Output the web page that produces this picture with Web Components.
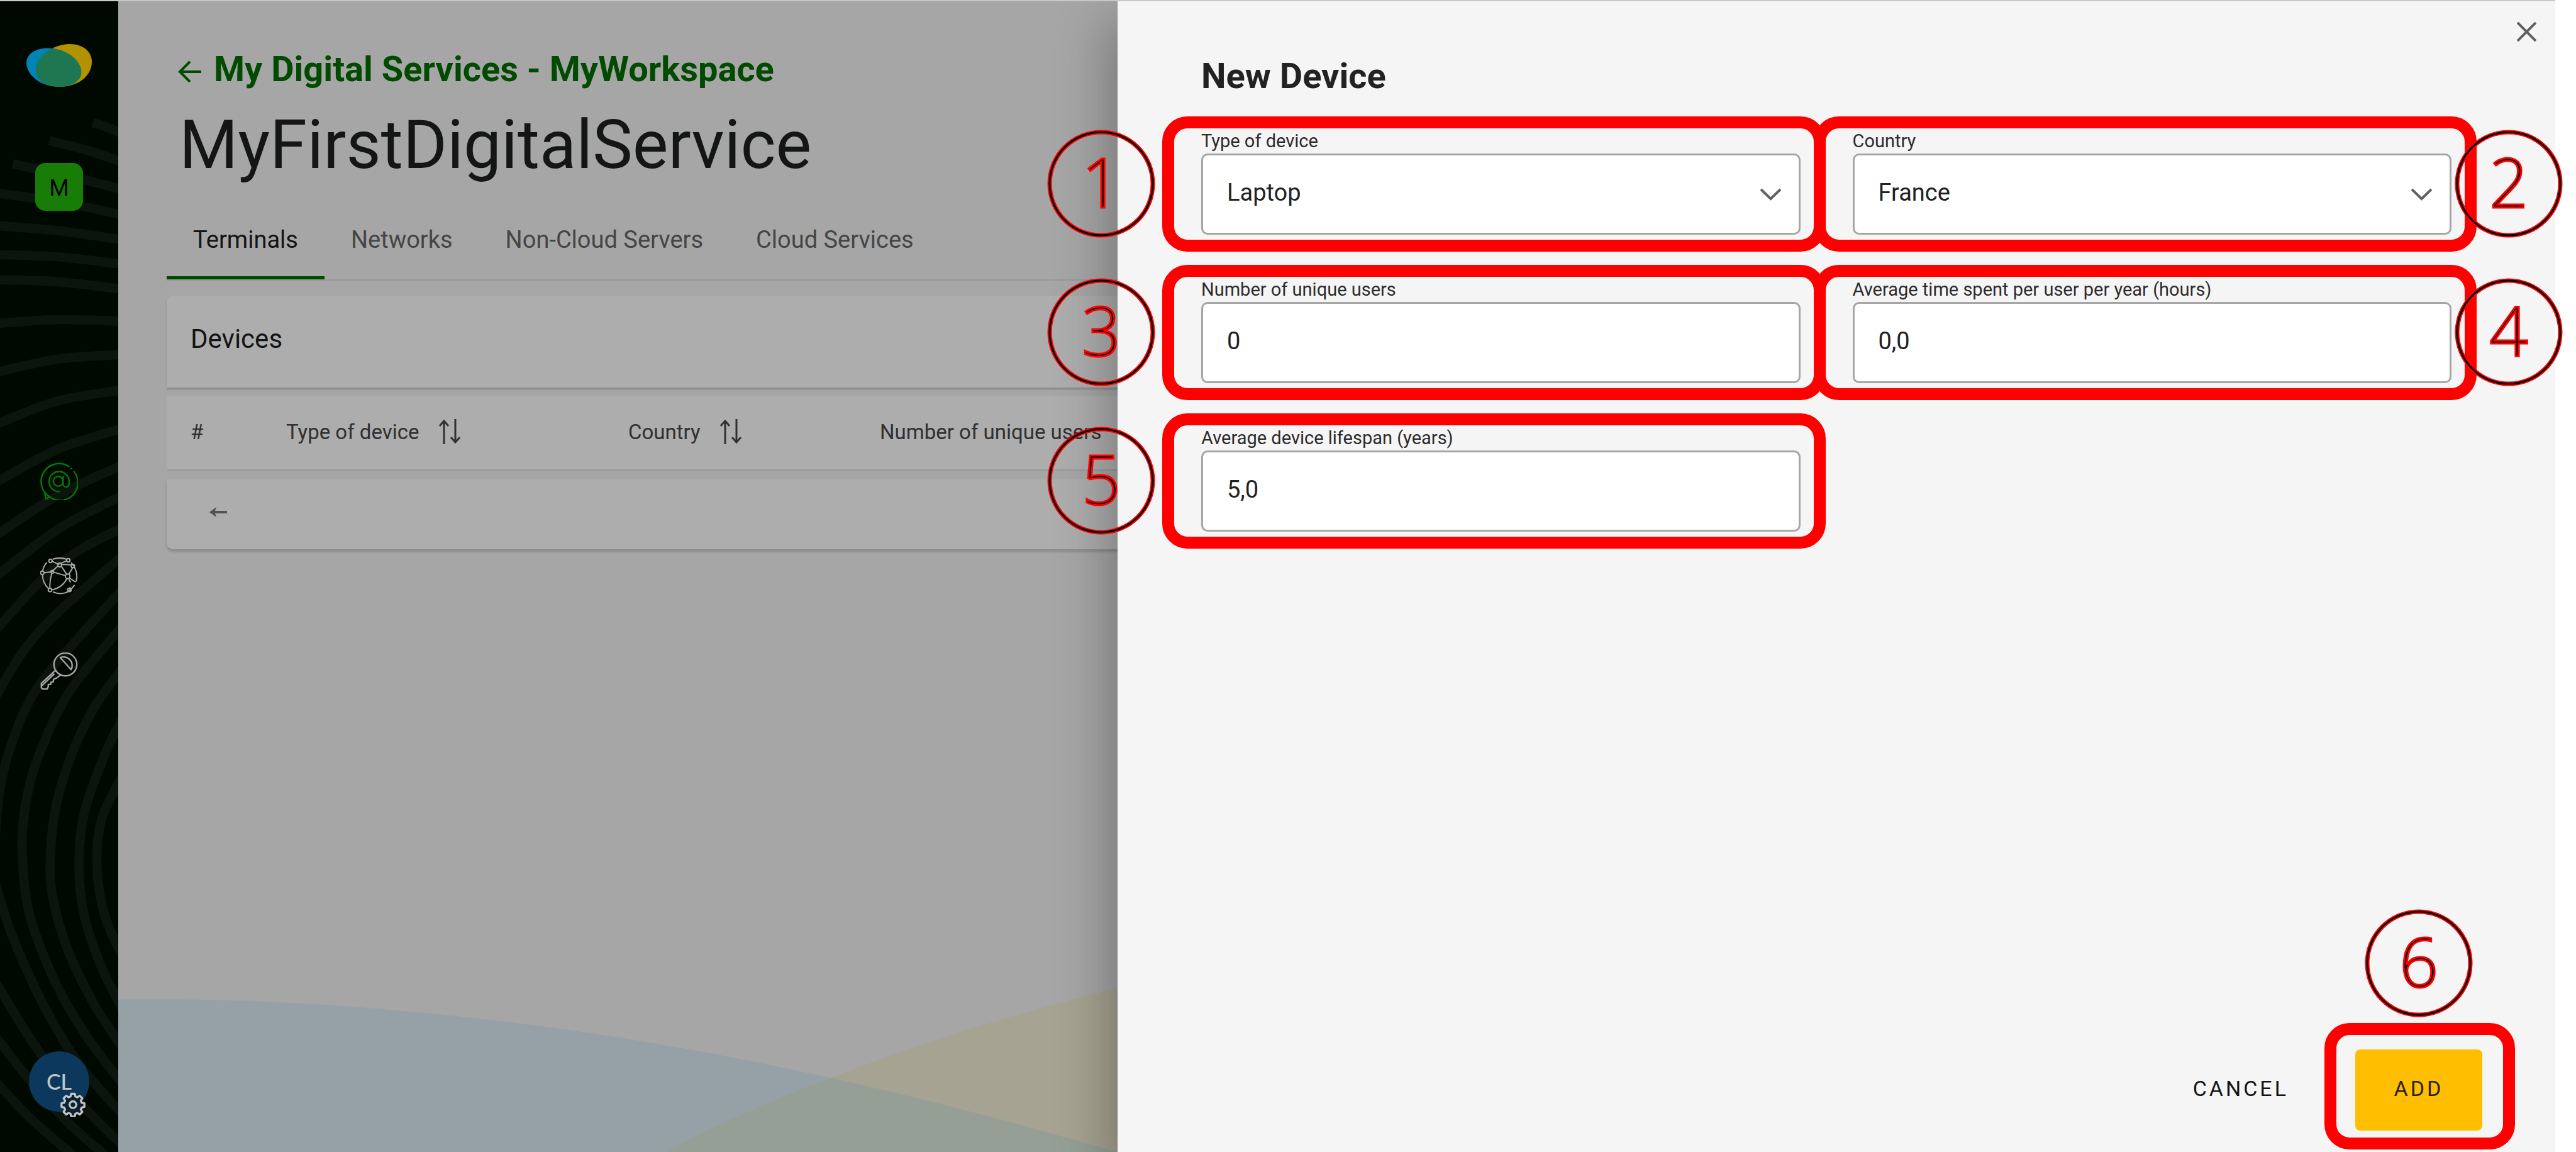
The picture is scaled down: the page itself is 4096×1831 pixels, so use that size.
<!DOCTYPE html>
<html lang="en">
<head>
<meta charset="utf-8">
<title>MyFirstDigitalService - New Device</title>
<style>
  html, body { height: 100%; margin: 0; background: #fff; }
  body { font-family: Roboto, "Liberation Sans", sans-serif; color: #141414; }
</style>
</head>
<body>
<app-shell>
  <side-nav slot="nav"></side-nav>
  <service-page slot="page"></service-page>
  <side-drawer slot="drawer" heading="New Device">
    <form-field label="Type of device" value="Laptop" kind="select" step="1"></form-field>
    <form-field label="Country" value="France" kind="select" step="2" side="right"></form-field>
    <form-field label="Number of unique users" value="0" step="3"></form-field>
    <form-field label="Average time spent per user per year (hours)" value="0,0" step="4" side="right"></form-field>
    <form-field label="Average device lifespan (years)" value="5,0" step="5"></form-field>
  </side-drawer>
</app-shell>

<script>
class Base extends HTMLElement {
  connectedCallback() {
    if (this.shadowRoot) return;
    this.attachShadow({ mode: 'open' }).innerHTML =
      '<style>*{box-sizing:border-box}button{font:inherit;color:inherit;background:none;border:0;padding:0;margin:0}svg{display:block}</style>' + this.render();
  }
}

customElements.define('app-shell', class extends Base {
  render() {
    return `<style>
      :host { display: grid; grid-template-columns: 188px 1589fr 2286fr 33px; grid-template-rows: 100%; height: 100vh; overflow: hidden; }
      ::slotted(*) { grid-row: 1; border-top: 2px solid #c8c8c8; box-sizing: border-box; min-width: 0; }
      ::slotted([slot=nav]) { grid-column: 1; }
      ::slotted([slot=page]) { grid-column: 2 / 4; }
      ::slotted([slot=drawer]) { grid-column: 3; z-index: 1; }
    </style>
    <slot name="nav"></slot><slot name="page"></slot><slot name="drawer"></slot>`;
  }
});

/* Arcs of the navigation background, as points that a smooth curve runs through. */
const ARCS = [
  [[160,211],[180,217],[212,231]],
  [[85,242],[145,257],[212,279]],
  [[22,282],[110,301],[212,326]],
  [[-8,332],[100,347],[212,370]],
  [[-8,388],[100,397],[212,413]],
  [[-8,438],[100,442],[212,455]],
  [[-8,481],[100,485],[212,498]],
  [[-8,557],[100,550],[212,553]],
  [[-8,641],[100,618],[212,610]],
  [[-8,731],[100,690],[212,671]],
  [[-8,831],[100,773],[212,737]],
  [[-8,922],[100,852],[212,800]],
  [[-8,993],[100,911],[212,852]],
  [[-8,1085],[100,972],[212,907]],
  [[-8,1200],[40,1121],[100,1054],[212,956]],
  [[-8,1440],[-2,1370],[15,1295],[50,1208],[100,1138],[212,1013]],
  [[212,1867],[150,1785],[95,1690],[50,1570],[38,1461],[45,1380],[67,1300],[120,1190],[212,1076]],
  [[212,1805],[160,1725],[115,1630],[90,1540],[87,1470],[97,1385],[123,1300],[160,1222],[212,1148]],
  [[212,1739],[175,1665],[145,1575],[136,1490],[145,1400],[180,1300],[212,1234]],
  [[212,1648],[180,1575],[167,1490],[175,1410],[212,1334]],
  [[-8,1520],[20,1608],[75,1730],[135,1830],[212,1920]],
  [[-8,1690],[60,1800],[130,1890],[212,1973]],
  [[-8,1784],[60,1870],[120,1935],[190,1996]],
  [[-8,1862],[60,1932],[140,2000]]
];
const smooth = p => p.slice(1).reduce((d, b, i) => {
  const a = p[i], z = p[i - 1] || a, c = p[i + 2] || b;
  return d + `C${a[0] + (b[0] - z[0]) / 6} ${a[1] + (b[1] - z[1]) / 6} ${b[0] - (c[0] - a[0]) / 6} ${b[1] - (c[1] - a[1]) / 6} ${b[0]} ${b[1]}`;
}, `M${p[0]}`);

customElements.define('side-nav', class extends Base {
  render() {
    return `<style>
      :host { display: block; position: relative; background: #000900; }
      .bg { position: absolute; inset: 0; width: 100%; height: 100%; }
      nav { position: relative; height: 100%; display: flex; flex-direction: column; align-items: center; padding: 68px 0 64px; }
      .space { margin-top: 121px; width: 76px; height: 76px; border-radius: 16px; background: #177d07; color: #000; font-size: 36px; line-height: 80px; text-align: center; }
      .links { margin-top: 400px; display: flex; flex-direction: column; gap: 91px; }
      a { display: block; color: #a8a8a8; }
      a.on { color: #007d00; }
      .me { margin-top: auto; position: relative; width: 96px; height: 96px; border-radius: 50%; background: #0b385c; color: #c4c4c4; font: 500 34px/92px Lato, sans-serif; }
      .me svg { position: absolute; left: 50px; top: 64px; }
    </style>
    <svg class="bg" viewBox="0 2 204 1981" preserveAspectRatio="xMinYMin slice" fill="none" stroke="#0c150d" stroke-width="16" aria-hidden="true">${ARCS.map(a => `<path d="${smooth(a)}"/>`).join('')}</svg>
    <nav>
      <svg width="104" height="68" viewBox="44 76 112 73" aria-hidden="true">
        <clipPath id="c"><path d="M118 76C142 76 156 90 156 106C156 131 132 149 100 149C76 149 60 138 60 118C60 98 90 76 118 76Z"/></clipPath>
        <path fill="#b39200" d="M118 76C142 76 156 90 156 106C156 131 132 149 100 149C76 149 60 138 60 118C60 98 90 76 118 76Z"/>
        <path fill="#0083b5" d="M44 108C44 93 60 83 80 83C112 83 138 104 138 124C138 140 120 149 98 149C70 149 44 130 44 108Z"/>
        <path fill="#1f7751" clip-path="url(#c)" d="M44 108C44 93 60 83 80 83C112 83 138 104 138 124C138 140 120 149 98 149C70 149 44 130 44 108Z"/>
      </svg>
      <button class="space">M</button>
      <div class="links">
        <a class="on" href="#services" aria-label="Digital services"><svg width="60" height="60" viewBox="0 0 66 66" fill="none" stroke="currentColor" stroke-width="2.6" stroke-linecap="round" stroke-linejoin="round"><path d="M50 7A31 31 0 1 0 16 60L10 64L8 53M59 16A31 31 0 0 1 16 60M54 10.500L54.500 11"/><path d="M33 51A17.500 17.500 0 1 1 50.500 33V37C50.500 45 40 45 40 37V25M40 33A8.500 8.500 0 1 1 23 33A8.500 8.500 0 1 1 40 33"/></svg></a>
        <a href="#network" aria-label="Network"><svg width="60" height="60" viewBox="0 0 66 66" fill="none" stroke="currentColor" stroke-width="2.200"><path d="M22 3Q34 -1 46 3M54 9Q67 23 63 42M60 48Q52 60 43 62Q33 65 22 60M15 55Q4 45 4 30M4 24Q7 12 12 9M19 6L32 12L46 6M36 14L46 29M37 12L55 13M57 17L50 30M6 27L20 25L32 14M24 26L45 32M20 28Q16 42 17 54M20 57Q40 52 47 36M51 36L62 43M50 38L53 44M52 52V56"/><circle cx="18" cy="6" r="3"/><circle cx="34" cy="13" r="3.500"/><circle cx="49" cy="5" r="3"/><circle cx="57" cy="15" r="3"/><circle cx="3.500" cy="27" r="3"/><circle cx="21" cy="25" r="2.500"/><circle cx="48" cy="33" r="4"/><circle cx="17" cy="57" r="3"/><circle cx="51" cy="57" r="3"/></svg></a>
        <a href="#access" aria-label="Access keys"><svg width="60" height="60" viewBox="0 0 66 66" fill="none" stroke="currentColor" stroke-width="2.600" stroke-linejoin="round" stroke-linecap="round"><circle cx="44" cy="21" r="20"/><path d="M35 9A15 15 0 0 1 54 30Z"/><path d="M27 31L2 54V62L5 64H12L14 60V56H18L19 52L23 51V47L28 45L36 39M4 57L24 38"/></svg></a>
      </div>
      <button class="me" aria-label="Account settings">CL
        <svg width="40" height="40" viewBox="0 0 24 24" fill="#0b2233" stroke="#c4c4c4" stroke-width="2" stroke-linejoin="round"><path d="M10.300 2h3.400l.6 2.600 1.900.8 2.300-1.400 2.400 2.400-1.400 2.300.8 1.900 2.600.6v3.400l-2.600.6-.8 1.900 1.400 2.300-2.400 2.400-2.300-1.400-1.900.8-.6 2.600h-3.400l-.6-2.600-1.900-.8-2.300 1.400-2.400-2.400 1.400-2.300-.8-1.900L1.100 14.600v-3.400l2.600-.6.8-1.900-1.400-2.300L5.500 4l2.300 1.400 1.900-.8z"/><circle cx="12" cy="12.500" r="3.200"/></svg>
      </button>
    </nav>`;
  }
});

const SORT = '<svg width="36" height="40" viewBox="0 0 36 40" fill="none" stroke="#303030" stroke-width="3"><path d="M9 40V3M2 11L9 3L16 11M27 0V37M20 29L27 37L34 29"/></svg>';

customElements.define('service-page', class extends Base {
  render() {
    return `<style>
      :host { display: grid; background: #a6a6a6; overflow: hidden; }
      :host > * { grid-area: 1 / 1; }
      .waves { align-self: end; width: 41%; min-width: 1590px; }
      .body { padding: 76px 77px 0; position: relative; }
      .back { display: flex; align-items: center; gap: 20px; padding-left: 18px; font-size: 56px; font-weight: 700; line-height: 64px; color: #004b00; text-decoration: none; }
      h1 { margin: 29px 0 0; padding-left: 20px; font-size: 107px; font-weight: 400; line-height: 120px; color: #141616; }
      .tabs { display: flex; margin-top: 66px; border-bottom: 2px solid #989898; }
      .tabs button { padding: 0 42px 34px; border-bottom: 5px solid transparent; font-size: 38px; line-height: 48px; color: #454545; }
      .tabs button[aria-selected=true] { color: #141414; border-color: #004700; }
      h2 { margin: 24px 0 0; height: 146px; padding: 46px 38px; font-size: 42px; font-weight: 400; line-height: 46px; background: #adadad; border-radius: 10px 10px 0 0; box-shadow: 0 3px 3px #8a8a8a; }
      table { width: 100%; table-layout: fixed; border-spacing: 0 14px; color: #303030; }
      th { height: 118px; padding: 0 0 4px 38px; background: #adadad; border-bottom: 2px solid #9a9a9a; font-size: 33px; font-weight: 400; text-align: left; }
      th:nth-child(1) { width: 152px; } th:nth-child(2) { width: 544px; } th:nth-child(3) { width: 400px; }
      th button { display: flex; align-items: center; gap: 30px; }
      td { height: 111px; padding: 0 68px; background: #adadad; border-radius: 0 0 10px 10px; box-shadow: 0 4px 4px #8a8a8a; }
      td button { display: block; padding-bottom: 8px; }
    </style>
    <svg class="waves" viewBox="204 1690 1722 293" aria-hidden="true">
      <path fill="#95a1a7" d="M204 1721C420 1718 640 1730 935 1767C1120 1793 1260 1818 1431 1856C1590 1891 1740 1931 1926 1984H204Z"/>
      <path fill="#a7a392" d="M1147 1984C1230 1938 1330 1894 1431 1856C1580 1798 1740 1747 1926 1701V1984Z"/>
      <path fill="#959f95" d="M1431 1856C1590 1891 1740 1931 1926 1984H1147C1230 1938 1330 1894 1431 1856Z"/>
    </svg>
    <div class="body">
      <a class="back" href="#services"><svg width="37" height="42" viewBox="0 0 37 42" fill="none" stroke="currentColor" stroke-width="4"><path d="M37 25H3M19 9L3 25L19 41"/></svg>My Digital Services - MyWorkspace</a>
      <h1>MyFirstDigitalService</h1>
      <div class="tabs" role="tablist">
        <button role="tab" aria-selected="true">Terminals</button><button role="tab">Networks</button><button role="tab">Non-Cloud Servers</button><button role="tab">Cloud Services</button>
      </div>
      <h2>Devices</h2>
      <table>
        <thead><tr><th>#</th><th><button>Type of device ${SORT}</button></th><th><button>Country ${SORT}</button></th><th>Number of unique users</th></tr></thead>
        <tbody><tr><td colspan="4"><button aria-label="Previous page"><svg width="28" height="16" viewBox="0 0 28 16" fill="#525252"><path d="M0 8L11 0L9 6H28V10H9L11 16Z"/></svg></button></td></tr></tbody>
      </table>
    </div>`;
  }
});

/* Numbered circle: a thin black line edged in red on both sides. */
customElements.define('step-badge', class extends Base {
  render() {
    return `<style>
      :host { display: block; width: 172px; height: 172px; pointer-events: none; }
      circle { fill: none; }
      text { font: 300 108px "Open Sans", sans-serif; fill: #000; stroke: #f00; stroke-width: 3px; text-anchor: middle; }
    </style>
    <svg width="172" height="172" viewBox="0 0 172 172"><circle cx="86" cy="86" r="82" stroke="#f00" stroke-width="7"/><circle cx="86" cy="86" r="82" stroke="#000" stroke-width="3"/><text x="86" y="124">${this.getAttribute('n')}</text></svg>`;
  }
});

customElements.define('form-field', class extends Base {
  render() {
    const v = this.getAttribute('value');
    const control = this.getAttribute('kind') === 'select'
      ? `<select id="f"><option>${v}</option></select><svg width="33" height="20" viewBox="0 0 33 20" fill="none" stroke="#606060" stroke-width="4"><path d="M1 2L16.500 17L32 2"/></svg>`
      : `<input id="f" type="text" inputmode="decimal" value="${v}">`;
    return `<style>
      :host { display: block; position: relative; }
      label { display: block; height: 37px; font-size: 29px; line-height: 34px; color: #2c2c2c; white-space: nowrap; }
      .box { display: grid; align-items: center; }
      .box > * { grid-area: 1 / 1; }
      select, input { appearance: none; width: 100%; height: 129px; margin: 0; padding: 0 38px 6px; border: 3px solid #a6a6a6; border-radius: 10px; background: #fff; color: #222; font: 38px Roboto, sans-serif; }
      .box svg { justify-self: end; margin-right: 31px; pointer-events: none; }
      .frame { position: absolute; inset: -22px -40px -27px -62px; border: 19px solid #f00; border-radius: 40px; pointer-events: none; }
      step-badge { position: absolute; top: calc(50% - 84px); left: -245px; }
      :host([side=right]) step-badge { left: auto; right: -177px; }
    </style>
    <label for="f">${this.getAttribute('label')}</label><div class="box">${control}</div>
    <div class="frame"></div><step-badge n="${this.getAttribute('step')}"></step-badge>`;
  }
});

customElements.define('side-drawer', class extends Base {
  render() {
    return `<style>
      :host { display: flex; flex-direction: column; position: relative; background: #f5f5f5; }
      .shade { position: absolute; inset: 0; z-index: -1; box-shadow: 0 40px 80px 12px rgba(0,0,0,.3); clip-path: inset(0 0 0 -200px); }
      .close { align-self: flex-end; margin: 33px 30px 0 0; }
      h2 { margin: 23px 133px 0; font-size: 56px; font-weight: 700; line-height: 64px; color: #222; }
      form { flex: 1; display: flex; flex-direction: column; margin-top: 54px; }
      .grid { display: grid; grid-template-columns: 1fr 1fr; gap: 70px 83px; padding: 0 165px 0 133px; }
      footer { margin-top: auto; padding: 0 116px 34px; display: flex; justify-content: flex-end; align-items: center; gap: 46px; font-size: 34px; }
      footer button { padding: 0 60px 6px; height: 129px; letter-spacing: 4px; }
      .add { position: relative; width: 202px; border-radius: 8px; background: #ffbf00; color: #222; }
      .frame { position: absolute; inset: -42px -52px -30px -49px; border: 19px solid #f00; border-radius: 40px; }
      step-badge { position: absolute; left: 15px; bottom: 180px; letter-spacing: 0; }
    </style>
    <div class="shade"></div>
    <button class="close" aria-label="Close"><svg width="31" height="31" viewBox="0 0 31 31" stroke="#606060" stroke-width="4"><path d="M1 1L30 30M30 1L1 30"/></svg></button>
    <h2>${this.getAttribute('heading')}</h2>
    <form>
      <div class="grid"><slot></slot></div>
      <footer><button type="button">CANCEL</button><button type="button" class="add">ADD<span class="frame"></span><step-badge n="6"></step-badge></button></footer>
    </form>`;
  }
});
</script>
</body>
</html>
